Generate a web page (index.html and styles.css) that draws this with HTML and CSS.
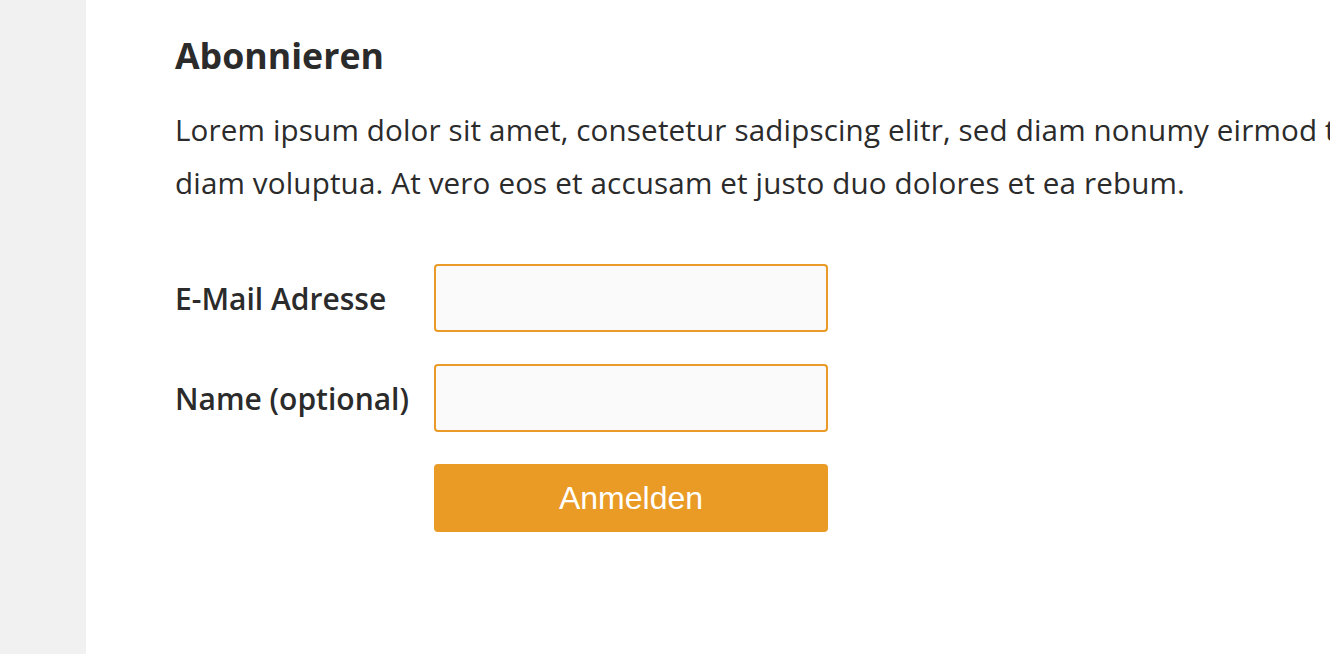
FILE: index.html
```html
<!DOCTYPE html>
<html lang="de">
<head>
<meta charset="utf-8">
<title>Abonnieren</title>
<link rel="stylesheet" href="styles.css">
</head>
<body>
<div class="page">
  <aside class="sidebar"></aside>
  <main class="content">
    <h1 class="title">Abonnieren</h1>
    <p class="intro">Lorem ipsum dolor sit amet, consetetur sadipscing elitr, sed diam nonumy eirmod tempor invidunt ut labore et dolore magna aliquyam erat, sed<br>diam voluptua. At vero eos et accusam et justo duo dolores et ea rebum.</p>
    <form class="form">
      <div class="row">
        <label class="label" for="email">E-Mail Adresse</label>
        <input class="input" id="email" type="email">
      </div>
      <div class="row">
        <label class="label" for="name">Name (optional)</label>
        <input class="input" id="name" type="text">
      </div>
      <div class="row">
        <span class="label"></span>
        <button class="button" type="button">Anmelden</button>
      </div>
    </form>
  </main>
</div>
</body>
</html>
```
FILE: styles.css
```css
html, body {
  margin: 0;
  padding: 0;
  height: 100%;
  background: #ffffff;
  overflow: hidden;
}
.page {
  display: flex;
  height: 100%;
  font-family: "Open Sans", sans-serif;
  color: #2b2b2b;
}
.sidebar {
  width: 86px;
  flex: none;
  background: #f1f1f1;
}
.content {
  flex: 1;
  padding: 29px 0 0 89px;
  min-width: 0;
  overflow: hidden;
}
.title {
  margin: 0;
  font-size: 35.7px;
  font-weight: 700;
  line-height: 52px;
}
.intro {
  margin: 23px 0 0;
  white-space: nowrap;
  font-size: 29.6px;
  letter-spacing: 0.15px;
  line-height: 52.5px;
}
.form {
  margin-top: 55px;
  display: flex;
  flex-direction: column;
  gap: 32px;
}
.row {
  display: flex;
  align-items: center;
}
.label {
  width: 259px;
  flex: none;
  font-size: 30px;
  font-weight: 600;
}
.input {
  box-sizing: border-box;
  width: 394px;
  height: 68px;
  border: 2px solid #e99a27;
  border-radius: 4px;
  background: #fafafa;
  margin: 0;
  padding: 0 12px;
  font-size: 24px;
}
.button {
  box-sizing: border-box;
  width: 394px;
  height: 68px;
  border: none;
  border-radius: 4px;
  background: #e99b26;
  color: #ffffff;
  font-family: "Liberation Sans", Arial, sans-serif;
  font-size: 32px;
  margin: 0;
  padding: 0;
}
```
